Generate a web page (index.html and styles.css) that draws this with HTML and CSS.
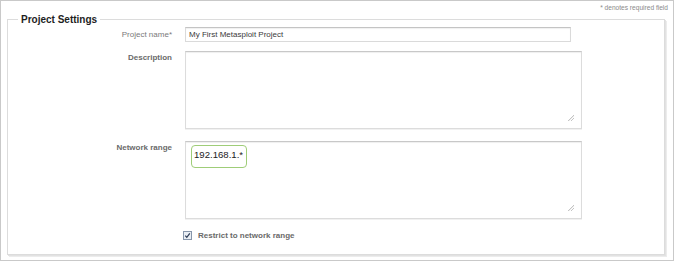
FILE: index.html
```html
<!DOCTYPE html>
<html lang="en">
  <head>
    <meta charset="UTF-8" />
    <title>Project Settings</title>
    <link rel="stylesheet" href="styles.css">
  </head>
  <body>
    <div class="frame">
      <div class="note">* denotes required field</div>
      <fieldset class="settings">
        <legend>Project Settings</legend>
        <div class="form">
          <label class="label light" for="name">Project name*</label>
          <div class="field"><input class="text" id="name" type="text" value="My First Metasploit Project" /></div>

          <label class="label gap1" for="desc">Description</label>
          <div class="field gap1"><textarea class="area" id="desc"></textarea></div>

          <label class="label gap2">Network range</label>
          <div class="field gap2">
            <div class="area range">
              <span class="mark">192.168.1.*</span>
              <span class="grip"></span>
            </div>
          </div>

          <div class="gap3"></div>
          <label class="restrict gap3">
            <svg class="box" width="9" height="9" viewBox="0 0 9 9">
              <rect x="0.5" y="0.5" width="8" height="8" fill="#e9eef4" stroke="#8796ab" />
              <path d="M2.3 4.6 L3.8 6.4 L6.8 2.3" fill="none" stroke="#2b3a55" stroke-width="1.2" />
            </svg>
            Restrict to network range
          </label>
        </div>
      </fieldset>
    </div>
  </body>
</html>
```

FILE: styles.css
```css
body {
  margin: 0;
  background: #fff;
  font-family: "Liberation Sans", Arial, sans-serif;
}

.frame {
  width: 674px;
  height: 261px;
  box-sizing: border-box;
  border: 1px solid #c9c9c9;
  padding: 0 5px 0 6px;
}

.note {
  padding-top: 2px;
  height: 9px;
  line-height: 9px;
  font-size: 6.6px;
  color: #8a8a8a;
  text-align: right;
}

.settings {
  margin: 0;
  min-width: 0;
  width: 658px;
  height: 243px;
  box-sizing: border-box;
  padding: 0;
  border: 1px solid #dcdcdc;
  box-shadow: 1px 1px 0 #e2e2e2, 2px 2px 0 #ececec;
}

.settings legend {
  margin-left: 10px;
  padding: 0 3px;
  line-height: 15px;
  font-size: 10px;
  font-weight: bold;
  color: #1e1e1e;
}

.form {
  display: grid;
  grid-template-columns: 164px 1fr;
  column-gap: 13px;
}

.label {
  text-align: right;
  font-size: 8px;
  font-weight: bold;
  color: #6a6a6a;
  line-height: 12px;
  padding-top: 1px;
}

.label.light {
  font-weight: normal;
  color: #7a7a7a;
  padding-top: 2px;
}

.gap1 { margin-top: 9px; }
.gap2 { margin-top: 12px; }
.gap3 { margin-top: 10px; }

.text {
  display: block;
  width: 386px;
  height: 15px;
  box-sizing: border-box;
  margin: 0;
  padding: 0 3px;
  border: 1px solid #dadada;
  border-top-color: #c4c4c4;
  border-radius: 0;
  outline: none;
  font-family: "Liberation Sans", Arial, sans-serif;
  font-size: 8px;
  color: #3a3a3a;
  box-shadow: inset 0 1px 1px #f0f0f0;
}

.area {
  display: block;
  position: relative;
  width: 397px;
  height: 78px;
  box-sizing: border-box;
  margin: 0;
  padding: 2px 5px;
  border: 1px solid #dcdcdc;
  border-top-color: #c8c8c8;
  border-radius: 0;
  outline: none;
  resize: none;
  background: #fff;
  box-shadow: inset 0 1px 1px #efefef, 0 1px 0 #f1f1f1;
}

textarea.area {
  background-image:
    linear-gradient(135deg, transparent 49%, #c4c4c4 50%, transparent 62%),
    linear-gradient(135deg, transparent 49%, #c4c4c4 50%, transparent 62%);
  background-size: 6px 6px, 3px 3px;
  background-position: right 7px bottom 7px, right 7px bottom 7px;
  background-repeat: no-repeat;
}

.mark {
  display: inline-block;
  margin-top: 1px;
  padding: 0 3px 0 2px;
  height: 21px;
  line-height: 18px;
  border: 1.5px solid #9fcd78;
  border-radius: 4px;
  font-size: 9.6px;
  color: #222;
}

.grip {
  position: absolute;
  right: 7px;
  bottom: 7px;
  width: 6px;
  height: 6px;
  background:
    linear-gradient(135deg, transparent 49%, #c4c4c4 50%, transparent 62%),
    linear-gradient(135deg, transparent 49%, #c4c4c4 50%, transparent 62%) no-repeat right bottom / 3px 3px;
}

.restrict {
  display: flex;
  align-items: center;
  gap: 6px;
  height: 13px;
  margin-left: -2px;
  font-size: 8px;
  font-weight: bold;
  color: #6a6a6a;
}

.box {
  display: block;
}
```
